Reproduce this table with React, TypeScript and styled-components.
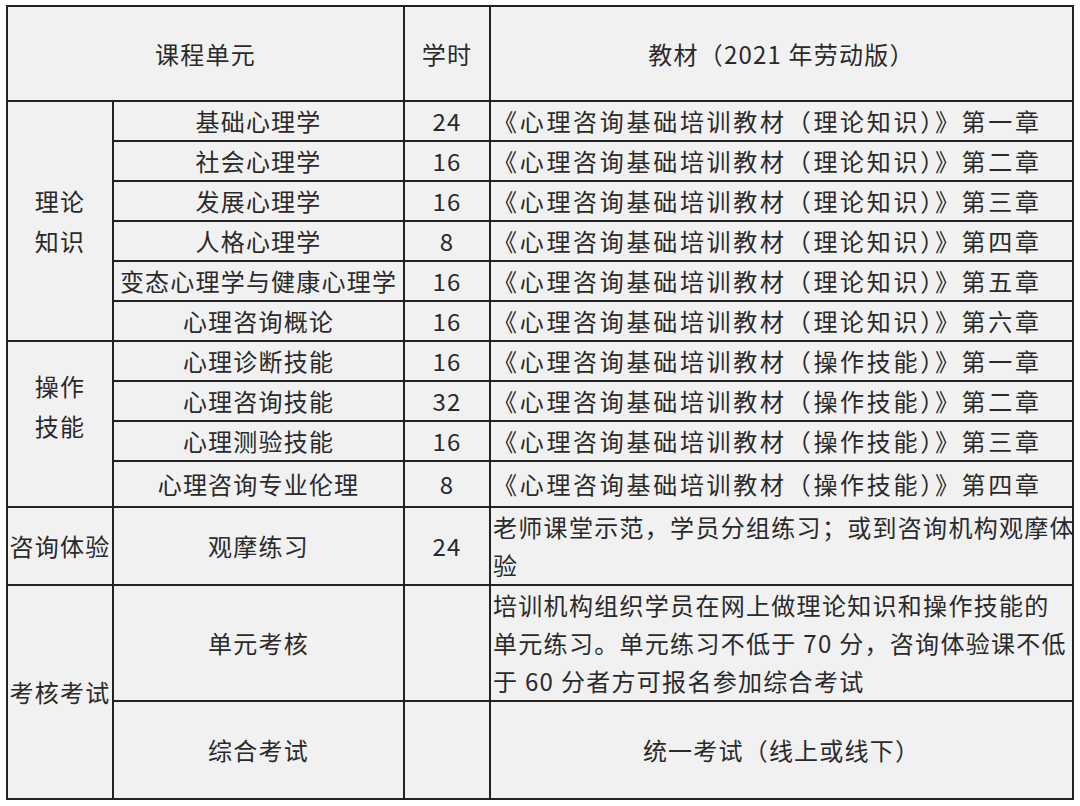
import React from 'react';
import styled, { createGlobalStyle } from 'styled-components';

const GlobalStyle = createGlobalStyle`
  html, body {
    margin: 0;
    padding: 0;
    background: #ffffff;
  }
  body {
    font-family: "Noto Sans CJK SC", "Noto Sans", sans-serif;
    color: #2a2a2a;
  }
`;

const Page = styled.div`
  width: 1080px;
  height: 806px;
  overflow: hidden;
  padding: 5px 0 0 6px;
  box-sizing: border-box;
`;

const Table = styled.table`
  width: 1066px;
  table-layout: fixed;
  border-collapse: collapse;
  background: #f1f1f1;
  font-size: 24px;
  letter-spacing: 1.2px;
`;

const Row = styled.tr<{ $h: number }>`
  height: ${(p) => p.$h}px;
`;

const Cell = styled.td<{ $align?: 'left' | 'center'; $pb?: number }>`
  border: 2px solid #222;
  padding: 0 0 ${(p) => p.$pb ?? 0}px ${(p) => (p.$align === 'left' ? 2 : 0)}px;
  text-align: ${(p) => p.$align ?? 'center'};
  vertical-align: middle;
  line-height: 38px;
  white-space: nowrap;
  overflow: visible;
`;

const Group = styled(Cell)`
  line-height: 40px;
`;

const Book = styled(Cell)`
  letter-spacing: 2.7px;
`;

const Note = styled(Cell)`
  vertical-align: top;
  padding-top: 0;
  letter-spacing: 1.3px;
`;

const theory = [
  ['基础心理学', '24', '第一章'],
  ['社会心理学', '16', '第二章'],
  ['发展心理学', '16', '第三章'],
  ['人格心理学', '8', '第四章'],
  ['变态心理学与健康心理学', '16', '第五章'],
  ['心理咨询概论', '16', '第六章'],
];

const skills = [
  ['心理诊断技能', '16', '第一章', 40],
  ['心理咨询技能', '32', '第二章', 40],
  ['心理测验技能', '16', '第三章', 40],
  ['心理咨询专业伦理', '8', '第四章', 46],
] as const;

export default function App() {
  return (
    <>
      <GlobalStyle />
      <Page>
        <Table>
          <colgroup>
            <col style={{ width: 106 }} />
            <col style={{ width: 291 }} />
            <col style={{ width: 86 }} />
            <col style={{ width: 583 }} />
          </colgroup>
          <tbody>
            <Row $h={95}>
              <Cell colSpan={2}>课程单元</Cell>
              <Cell>学时</Cell>
              <Cell>教材（2021 年劳动版）</Cell>
            </Row>

            {theory.map(([name, hours, chapter], i) => (
              <Row $h={40} key={name}>
                {i === 0 && (
                  <Group rowSpan={theory.length}>
                    理论
                    <br />
                    知识
                  </Group>
                )}
                <Cell>{name}</Cell>
                <Cell>{hours}</Cell>
                <Book $align="left">《心理咨询基础培训教材（理论知识）》{chapter}</Book>
              </Row>
            ))}

            {skills.map(([name, hours, chapter, h], i) => (
              <Row $h={h} key={name}>
                {i === 0 && (
                  <Group rowSpan={skills.length} $pb={36}>
                    操作
                    <br />
                    技能
                  </Group>
                )}
                <Cell>{name}</Cell>
                <Cell>{hours}</Cell>
                <Book $align="left">《心理咨询基础培训教材（操作技能）》{chapter}</Book>
              </Row>
            ))}

            <Row $h={78}>
              <Cell>咨询体验</Cell>
              <Cell>观摩练习</Cell>
              <Cell>24</Cell>
              <Note $align="left">
                老师课堂示范，学员分组练习；或到咨询机构观摩体
                <br />
                验
              </Note>
            </Row>

            <Row $h={115}>
              <Cell rowSpan={2}>考核考试</Cell>
              <Cell>单元考核</Cell>
              <Cell />
              <Note $align="left">
                培训机构组织学员在网上做理论知识和操作技能的
                <br />
                单元练习。单元练习不低于 70 分，咨询体验课不低
                <br />
                于 60 分者方可报名参加综合考试
              </Note>
            </Row>

            <Row $h={98}>
              <Cell>综合考试</Cell>
              <Cell />
              <Cell>统一考试（线上或线下）</Cell>
            </Row>
          </tbody>
        </Table>
      </Page>
    </>
  );
}
